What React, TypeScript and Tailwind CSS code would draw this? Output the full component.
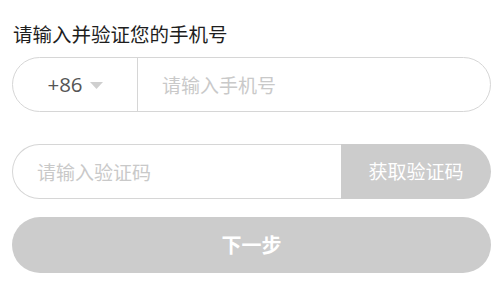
import React, { useState } from "react";

const App = () => {
  const [phone, setPhone] = useState("");
  const [code, setCode] = useState("");

  return (
    <div
      className="w-[500px] h-[300px] bg-white px-3 pt-[21px]"
      style={{ fontFamily: '"Noto Sans CJK SC", "Noto Sans", sans-serif' }}
    >
      <div className="text-[19.5px] leading-[26px] text-[#1e1e1e] pl-[1px]">请输入并验证您的手机号</div>

      {/* phone row */}
      <div className="mt-[10px] flex h-[55px] w-[479px] items-center rounded-full border border-[#d6d6d6]">
        <div className="flex h-full w-[125px] shrink-0 items-center justify-center gap-[7px] border-r border-[#d6d6d6]">
          <span className="text-[20.5px] text-[#555]" style={{ fontFamily: '"Open Sans", "Noto Sans", sans-serif' }}>
            +86
          </span>
          <svg width="13" height="7" viewBox="0 0 13 7" className="mt-[2px]">
            <path d="M0 0 H13 L6.5 7 Z" fill="#cfcfcf" />
          </svg>
        </div>
        <input
          value={phone}
          onChange={(e) => setPhone(e.target.value)}
          placeholder="请输入手机号"
          className="h-full flex-1 bg-transparent pl-6 text-[19px] text-[#333] outline-none placeholder:text-[#c9c9c9]"
        />
      </div>

      {/* code row */}
      <div className="mt-[32px] flex h-[55px] w-[479px] items-stretch">
        <div className="flex flex-1 items-center rounded-l-full border border-r-0 border-[#d6d6d6]">
          <input
            value={code}
            onChange={(e) => setCode(e.target.value)}
            placeholder="请输入验证码"
            className="h-full w-full bg-transparent pl-6 text-[19px] text-[#333] outline-none placeholder:text-[#c9c9c9]"
          />
        </div>
        <button className="w-[150px] shrink-0 rounded-r-full bg-[#cccccc] text-[19px] text-white">获取验证码</button>
      </div>

      {/* next */}
      <button className="mt-[18px] flex h-[56px] w-[479px] items-center justify-center rounded-full bg-[#cccccc] text-[20px] font-bold text-white">
        下一步
      </button>
    </div>
  );
};

export default App;
